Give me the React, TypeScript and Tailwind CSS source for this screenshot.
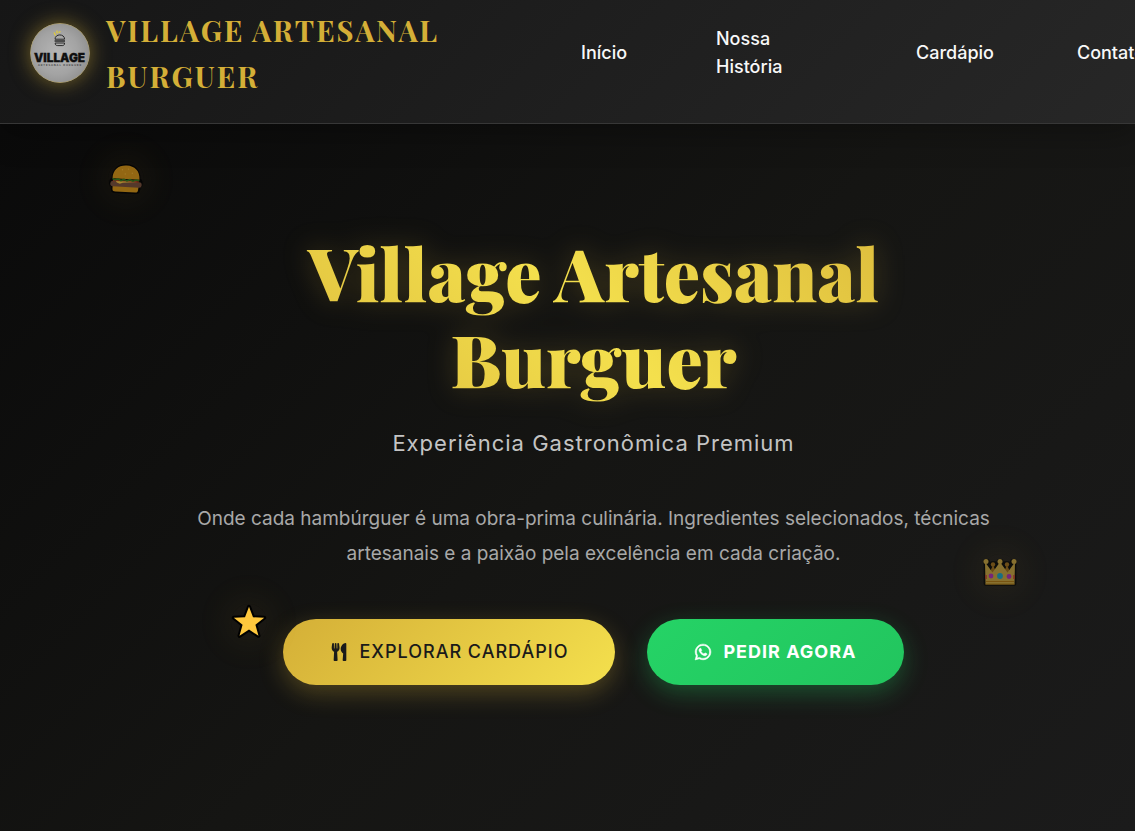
import React from "react";
import { FaUtensils, FaWhatsapp } from "react-icons/fa";

const serif = "font-['Playfair_Display','Liberation_Serif',serif]";

function LogoMark() {
  return (
    <svg
      viewBox="0 0 60 60"
      className="size-[60px] shrink-0 rounded-full shadow-[0_0_20px_rgba(212,175,55,0.5)]"
      role="img"
      aria-label="Village Artesanal Burguer"
    >
      <defs>
        <radialGradient id="stone" cx="45%" cy="50%" r="60%">
          <stop offset="0" stopColor="#b5b5b5" />
          <stop offset="0.6" stopColor="#a3a3a3" />
          <stop offset="1" stopColor="#8d8d8d" />
        </radialGradient>
      </defs>
      <circle cx="30" cy="30" r="30" fill="url(#stone)" />
      <circle cx="30" cy="30" r="29.7" fill="none" stroke="#b39a45" strokeWidth="0.6" />
      <path d="M25.500 12.500 L24 9.500 M27 10.500 L27 7.500 M28.500 9.500 L30.500 8.500" stroke="#e3cc35" strokeWidth="1.300" fill="none" />
      <g fill="none" stroke="#2b2b2b" strokeWidth="1">
        <path d="M25 16.2 C25 10.5 34.6 10.5 34.6 16.2 Z" />
        <path d="M24.6 18 H35" strokeWidth="1.6" />
        <path d="M25.2 20 H34.6 C34.6 22.6 33 22.6 32 22.6 H27.8 C26 22.6 25.2 22 25.2 20 Z" />
      </g>
      <text x="29.5" y="38.6" textAnchor="middle" fontFamily="Inter, sans-serif" fontWeight="900" fontSize="11.8" fill="#101010" stroke="#101010" strokeWidth="0.3">
        VILLAGE
      </text>
      <text x="30" y="42.8" textAnchor="middle" fontFamily="Inter, sans-serif" fontWeight="600" fontSize="2.6" letterSpacing="0.9" fill="#333">
        ARTESANAL BURGUER
      </text>
    </svg>
  );
}

function Burger() {
  return (
    <svg viewBox="0 0 36 36" className="size-9 rotate-3" aria-hidden="true">
      <path
        d="M5 18 C5 9 11 4.500 18 4.500 C25 4.500 31 9 31 18 C34 19 34 24 31.500 25 L31 29 C31 31 29 31 28 31 H8 C6 31 5 31 5 29 L4.500 25 C2 24 2 20 5 18 Z"
        fill="#050505" stroke="#050505" strokeWidth="3" strokeLinejoin="round"
      />
      <path d="M4.500 18 C4.500 9 10 4.500 18 4.500 C26 4.500 31.500 9 31.500 18 Z" fill="#936713" />
      <path d="M5 25 H31 L30.500 29 C30 31 29 31 28 31 H8 C6 31 5.500 31 5 29 Z" fill="#936713" />
      <rect x="2.500" y="20.500" width="31.500" height="5.500" rx="2.700" fill="#54392b" />
      <path d="M5 19.500 H31 V21 H5 Z" fill="#7d2b1b" />
      <path d="M8 20.500 H30 L15 22 L12 23 L9 22 Z" fill="#a8852e" />
      <path d="M4.500 18 L7 19.500 L10 18.400 L13 19.800 L16 18.500 L19 19.800 L22 18.500 L25 19.800 L28 18.500 L31.500 19" fill="none" stroke="#285818" strokeWidth="1.600" />
      <g fill="#a27a26">
        <circle cx="14" cy="9" r="0.700" />
        <circle cx="20" cy="8" r="0.700" />
        <circle cx="24" cy="12" r="0.700" />
        <circle cx="17" cy="13" r="0.700" />
      </g>
    </svg>
  );
}

function Crown() {
  return (
    <svg viewBox="0 0 36 36" className="size-9" aria-hidden="true">
      <path
        d="M3.500 30 V7 L6 7 L9 14 L10 9 H13 L15 12 L16.500 7 H19.500 L21 12 L23 9 H26 L27 14 L30 7 L32.500 7 V30 Z"
        fill="#0d0d0b" stroke="#0d0d0b" strokeWidth="3.600" strokeLinejoin="round"
      />
      <path d="M7 20 L11 11 L15 20 Z M21 20 L25 11 L29 20 Z" fill="#6c4d18" />
      <circle cx="11" cy="10.500" r="2.200" fill="#6c4d18" />
      <circle cx="25" cy="10.500" r="2.200" fill="#6c4d18" />
      <path d="M3 8 L10.500 18.500 L18 8 L25.500 18.500 L33 8 L32.500 30.500 H3.500 Z" fill="#87702f" />
      <circle cx="4" cy="7.500" r="2.500" fill="#87702f" />
      <circle cx="18" cy="7.500" r="2.500" fill="#87702f" />
      <circle cx="32" cy="7.500" r="2.500" fill="#87702f" />
      <path d="M4 27.500 H32 M3.500 30 H32.500" stroke="#75500f" strokeWidth="0.900" />
      <circle cx="9" cy="22" r="2.400" fill="#76257a" />
      <circle cx="18" cy="22" r="2.900" fill="#176f83" />
      <circle cx="27" cy="22.500" r="2.400" fill="#76257a" />
      <path d="M4 21 V25 M32 21 V25" stroke="#862d21" strokeWidth="1.400" />
    </svg>
  );
}

function Star() {
  return (
    <svg viewBox="0 0 36 36" className="size-9" aria-hidden="true">
      <path
        d="M18 2.800 L22 13.300 L33.200 13.800 L24.400 20.800 L27.500 31.800 L18 25.600 L8.500 31.800 L11.600 20.800 L2.800 13.800 L14 13.300 Z"
        fill="#ffc83d" stroke="#000" strokeWidth="4" strokeLinejoin="round" paintOrder="stroke"
      />
    </svg>
  );
}

const glow = "rounded-full shadow-[0_0_36px_6px_rgba(212,175,55,0.07)] bg-[rgba(212,175,55,0.03)]";
const link = "text-lg/7 font-medium text-[#f8f8f8]";
const button = "flex h-[66px] items-center gap-[11px] rounded-full px-[47px] text-lg tracking-[1px]";

export default function App() {
  return (
    <div className="flex min-h-screen flex-col overflow-hidden bg-[#0a0a0a] font-['Inter',sans-serif]">
      <header className="relative z-10 flex items-center border-b border-[#373737] bg-linear-135 from-[#161616] to-[#272727] pt-[7px] pb-6 pl-[30px] shadow-[0_8px_32px_rgba(0,0,0,0.3)]">
        <a href="#inicio" className="flex w-[551px] shrink-0 items-center gap-4">
          <LogoMark />
          <span className={`${serif} w-[360px] text-[29px]/[46px] font-bold tracking-[2px] text-[#d4af37]`}>
            VILLAGE ARTESANAL BURGUER
          </span>
        </a>
        <nav className="flex shrink-0 items-center gap-[83px]">
          <a href="#inicio" className={`${link} w-[52px]`}>Início</a>
          <a href="#historia" className={`${link} w-[117px]`}>Nossa<br />História</a>
          <a href="#cardapio" className={link}>Cardápio</a>
          <a href="#contato" className={link}>Contato</a>
        </nav>
      </header>

      <main className="relative flex grow flex-col items-center bg-linear-135 from-[#0a0a0a] via-[#151513] to-[#1b1b1b] pt-[105px] pl-[52px] text-center">
        <div className={`absolute top-[37px] left-[108px] ${glow}`}><Burger /></div>
        <div className={`absolute top-[430px] left-[982px] ${glow}`}><Crown /></div>
        <div className={`absolute top-[480px] left-[231px] ${glow}`}><Star /></div>

        <h1 className={`${serif} w-full max-w-[900px] bg-linear-45 from-[#d4af37] via-[#f4e04d] to-[#d4af37] bg-clip-text pb-2 text-7xl/[86px] font-black text-transparent drop-shadow-[0_0_14px_rgba(212,175,55,0.25)]`}>
          Village Artesanal<br />Burguer
        </h1>
        <p className="mt-4 text-[22px]/9 tracking-[1px] text-[#c4c4c4]">
          Experiência Gastronômica Premium
        </p>
        <p className="mt-10 max-w-[810px] text-[19px]/[35px] text-[#a8a8a8]">
          Onde cada hambúrguer é uma obra-prima culinária. Ingredientes selecionados, técnicas artesanais e a paixão pela excelência em cada criação.
        </p>
        <div className="mt-12 flex gap-8">
          <button type="button" className={`${button} bg-linear-135 from-[#d4af37] to-[#f4e04d] font-medium text-[#1a1a1a] shadow-[0_8px_25px_rgba(212,175,55,0.3)]`}>
            <FaUtensils className="size-[18px]" />
            EXPLORAR CARDÁPIO
          </button>
          <button type="button" className={`${button} bg-linear-135 from-[#25d366] to-[#22c55e] font-bold text-white shadow-[0_8px_25px_rgba(37,211,102,0.3)]`}>
            <FaWhatsapp className="size-[18px] overflow-visible stroke-white stroke-[16px]" />
            PEDIR AGORA
          </button>
        </div>
      </main>
    </div>
  );
}
